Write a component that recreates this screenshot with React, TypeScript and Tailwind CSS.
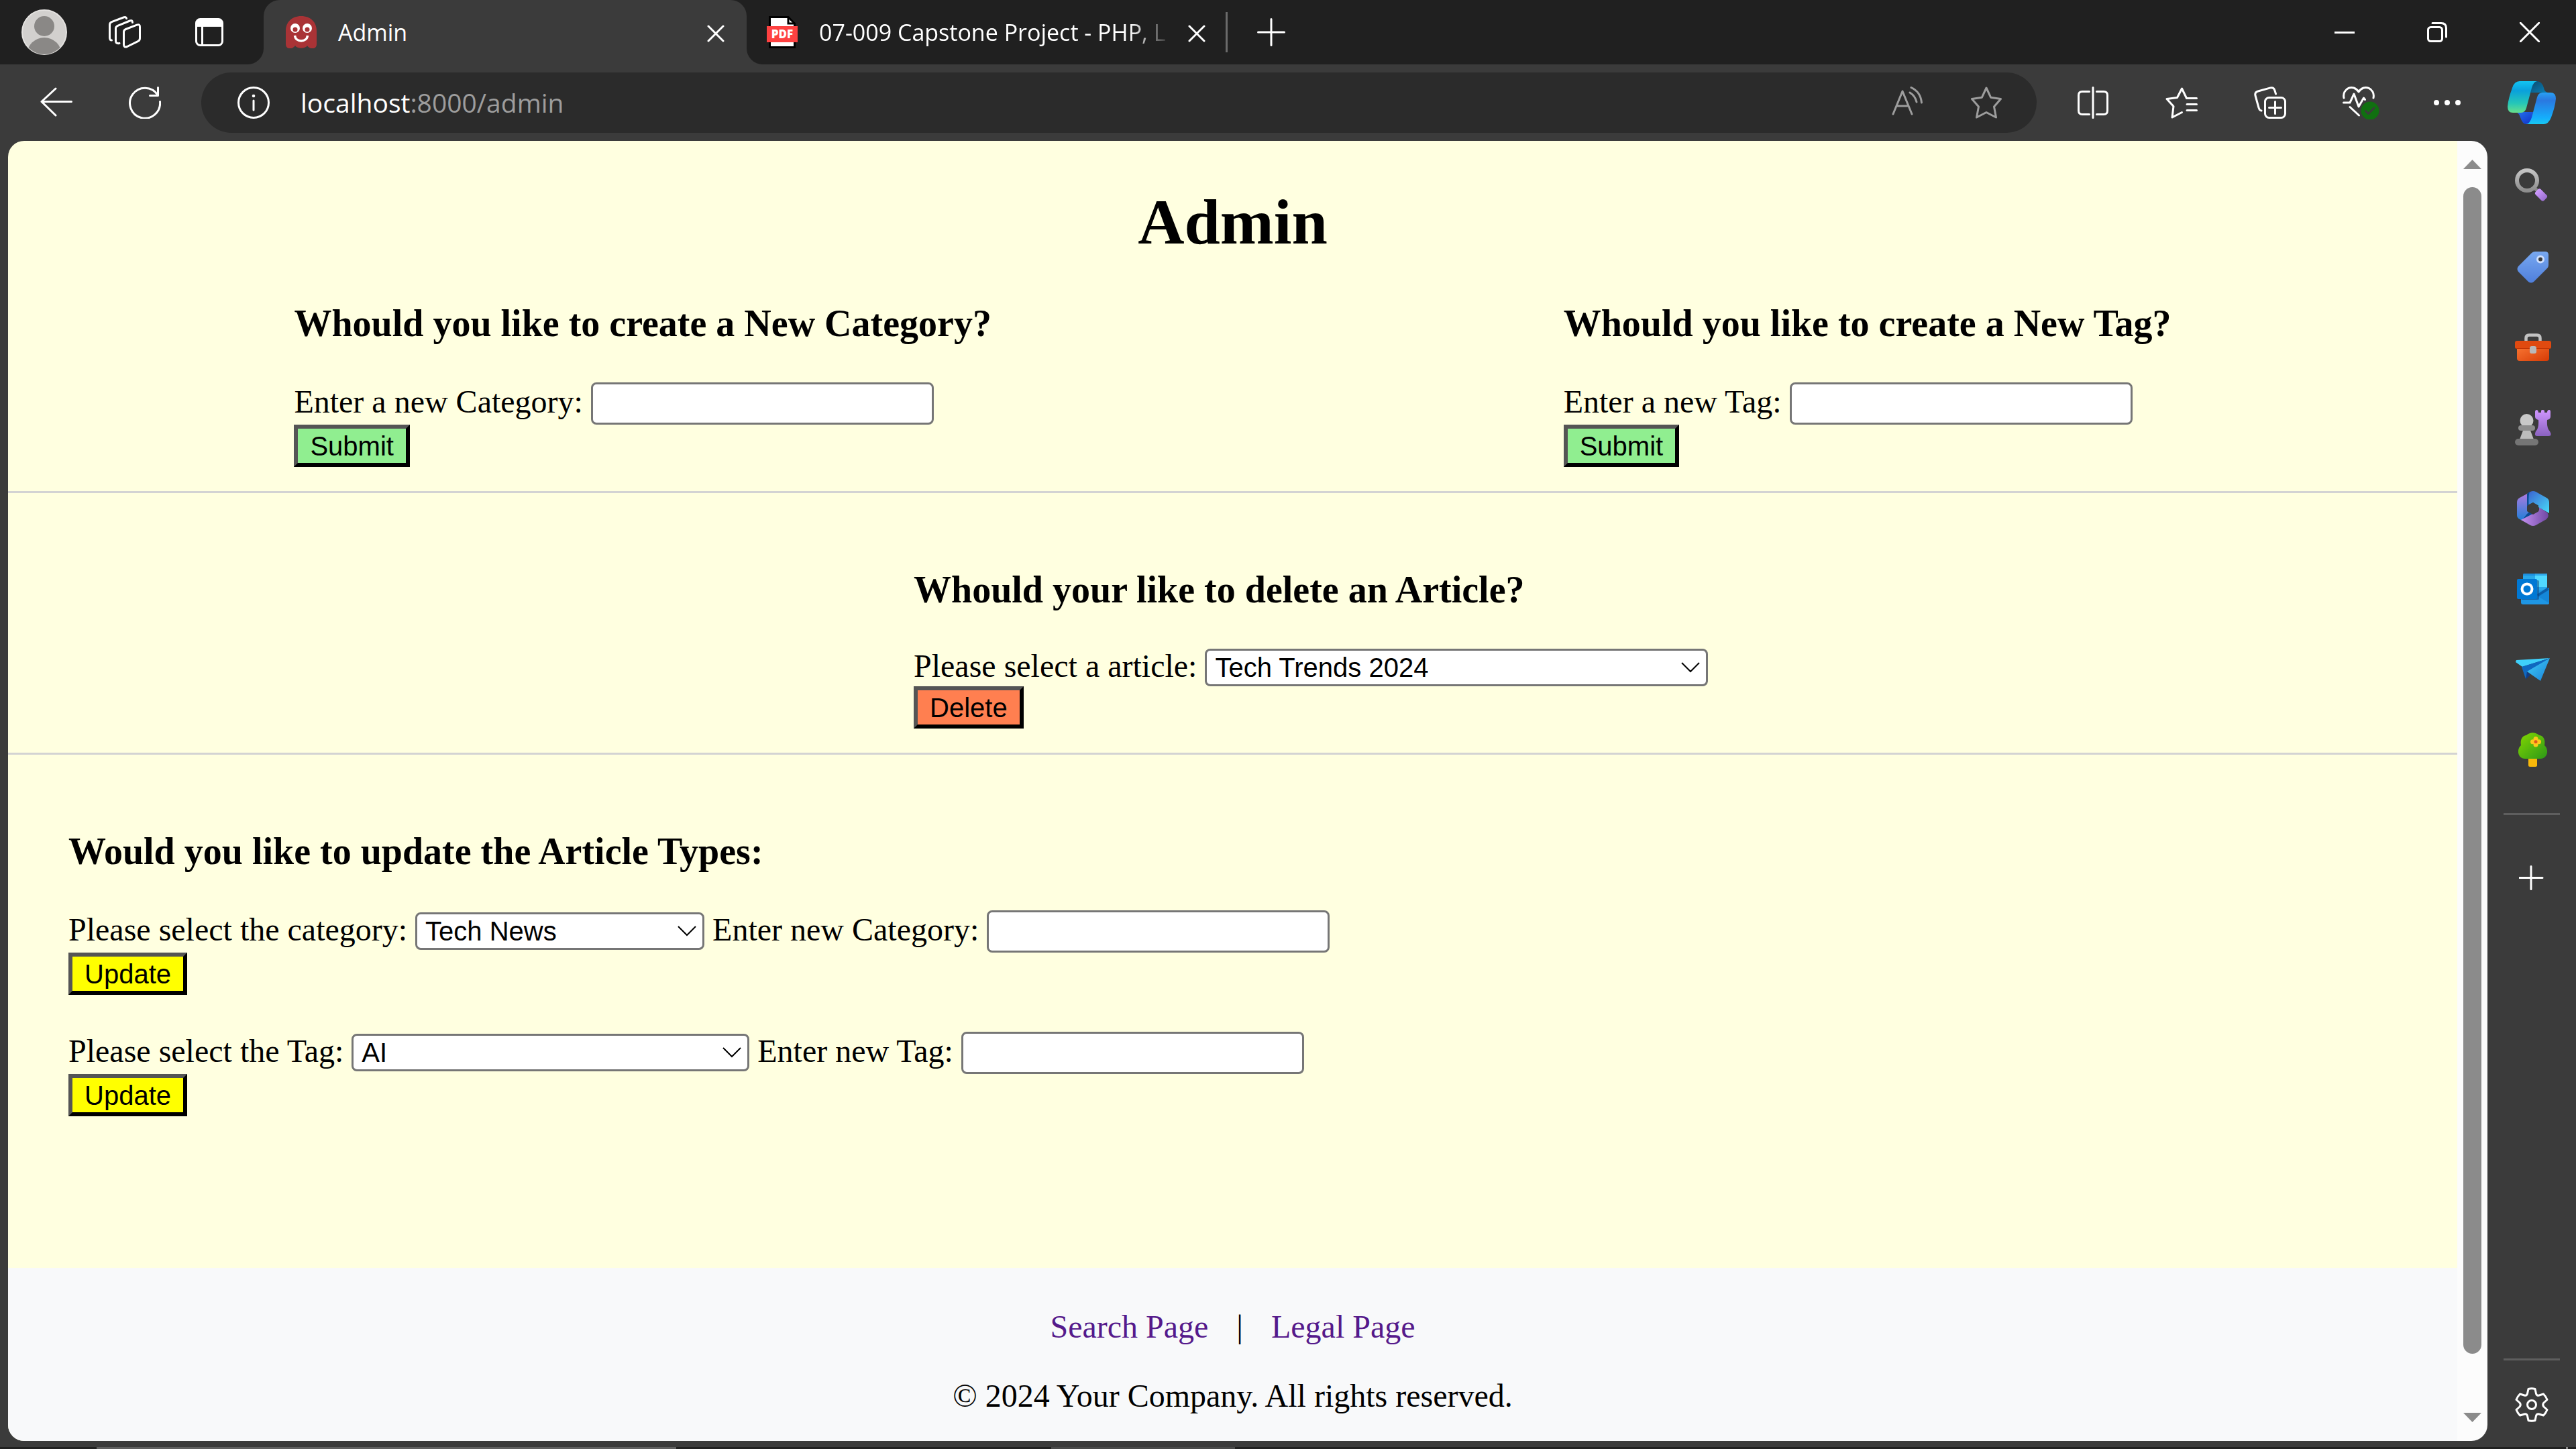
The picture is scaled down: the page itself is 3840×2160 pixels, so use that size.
import React, { useState } from "react";

type IconProps = { w: number; h: number; children: React.ReactNode; className?: string };

function Icon({ w, h, children, className }: IconProps) {
  return (
    <svg
      width={w}
      height={h}
      viewBox={`0 0 ${w} ${h}`}
      fill="none"
      stroke="currentColor"
      strokeWidth={3}
      strokeLinecap="round"
      strokeLinejoin="round"
      aria-hidden="true"
      className={"shrink-0 " + (className ?? "")}
    >
      {children}
    </svg>
  );
}

/* ---------- Tab strip icons ---------- */

const AvatarIcon = () => (
  <Icon w={68} h={68}>
    <defs>
      <clipPath id="avatar-clip">
        <circle cx="34" cy="34" r="33" />
      </clipPath>
    </defs>
    <circle cx="34" cy="34" r="33" fill="#d2d0ce" stroke="#e4e2e0" strokeWidth="2" />
    <g clipPath="url(#avatar-clip)" stroke="none" fill="#8a8886">
      <circle cx="34" cy="25" r="15" />
      <circle cx="34" cy="68" r="26" />
    </g>
  </Icon>
);

const WorkspacesIcon = () => (
  <Icon w={48} h={48}>
    <path d="M25.500 19.500 42 13.200Q46.500 11.600 46.500 16V33Q46.500 36.500 43.500 37.700L27.500 45.500Q22.500 47.500 22.500 42.500V23.500Q22.500 20.700 25.500 19.500Z" />
    <path d="M35.500 9.500Q35.500 5.500 31.500 7L13.500 14.300Q10.500 15.500 10.500 18.500V37Q10.500 41.500 16 40.500" />
    <path d="M26.500 3.500Q26 0.700 22 2L4.500 8.600Q1.500 9.800 1.500 13V32Q1.500 36 4.500 36" />
  </Icon>
);

const TabActionsIcon = () => (
  <Icon w={42} h={42}>
    <rect x="1.500" y="1.500" width="39" height="39" rx="6" />
    <path d="M1.500 12V7.500a6 6 0 0 1 6-6h27a6 6 0 0 1 6 6V12Z" fill="currentColor" strokeWidth="1" />
    <path d="M10.500 12V40" />
  </Icon>
);

const GhostIcon = () => (
  <Icon w={46} h={48}>
    <g stroke="none">
      <path
        d="M0 22C0 9 9 0 23 0S46 9 46 22V42C46 50 36 50 32 44C29 49 17 49 14 44C10 50 0 50 0 42Z"
        fill="#a93336"
      />
      <circle cx="14" cy="18" r="7" fill="#fff" />
      <circle cx="32" cy="18" r="7" fill="#fff" />
      <circle cx="14" cy="20" r="3.500" fill="#a93336" />
      <circle cx="32" cy="20" r="3.500" fill="#a93336" />
    </g>
    <path d="M13.500 29C14.500 39.500 31.500 39.500 32.500 29" stroke="#fff" strokeWidth="3.500" strokeLinecap="butt" />
  </Icon>
);

const PdfIcon = () => (
  <Icon w={46} h={48}>
    <path d="M4.500 1.500H32L41.500 11V46.500H4.500Z" fill="#fff" stroke="#000" strokeLinejoin="miter" />
    <path d="M32 1.500V11H41.500" stroke="#000" strokeLinejoin="miter" />
    <rect x="0" y="15" width="46" height="24" fill="#ff4141" stroke="none" />
    <text
      x="23"
      y="33"
      textAnchor="middle"
      fill="#fff"
      stroke="none"
      fontSize="17"
      fontWeight="800"
      fontFamily="'Open Sans', sans-serif"
    >
      PDF
    </text>
  </Icon>
);

const CloseIcon = () => (
  <Icon w={26} h={26}>
    <path d="M2 2 24 24M24 2 2 24" />
  </Icon>
);

const NewTabIcon = () => (
  <Icon w={42} h={42}>
    <path d="M21 1.500V40.500M1.500 21H40.500" />
  </Icon>
);

const MinimizeIcon = () => (
  <Icon w={30} h={30}>
    <path d="M0 15.500H30" strokeLinecap="butt" />
  </Icon>
);

const RestoreIcon = () => (
  <Icon w={30} h={30}>
    <rect x="1.500" y="7.500" width="21" height="21" rx="4" />
    <path d="M8 1.500H21Q28.500 1.500 28.500 9V22" />
  </Icon>
);

const WindowCloseIcon = () => (
  <Icon w={30} h={30}>
    <path d="M1 1 29 29M29 1 1 29" />
  </Icon>
);

/* ---------- Toolbar icons ---------- */

const BackIcon = () => (
  <Icon w={48} h={48}>
    <path d="M46.500 22.500H2M23 3 2 22.500 23 43" />
  </Icon>
);

const RefreshIcon = () => (
  <Icon w={48} h={48}>
    <path d="M46.500 22.500A22.500 22.500 0 1 1 43 12.500M43.500 1.500V13.500H31.500" />
  </Icon>
);

const InfoIcon = () => (
  <Icon w={48} h={48}>
    <circle cx="24" cy="24" r="22.500" />
    <path d="M24 21V35" />
    <circle cx="24" cy="14" r="2.300" fill="currentColor" stroke="none" />
  </Icon>
);

const ReadAloudIcon = () => (
  <Icon w={48} h={48} className="text-[#9d9d9d]">
    <path d="M2 41 16 7 30 41M7 29H25M27 9Q35 14 37 23M29 1.500Q43 8 44.500 24" />
  </Icon>
);

const StarIcon = () => (
  <Icon w={48} h={48} className="text-[#9d9d9d]">
    <path d="M24 2 30.700 16.300 45.500 18.500 35.500 30 38.500 46 24 38.500 9.500 46 12.500 30 2.500 18.500 17.300 16.300Z" />
  </Icon>
);

const SplitIcon = () => (
  <Icon w={48} h={48}>
    <path d="M24 1.500V46.500M18.500 7.500H8Q2.500 7.500 2.500 13V36Q2.500 41.500 8 41.500H18.500M29.500 7.500H40Q45.500 7.500 45.500 13V36Q45.500 41.500 40 41.500H29.500" />
  </Icon>
);

const FavoritesIcon = () => (
  <Icon w={48} h={48}>
    <path d="M46.500 17.500H31.500L24.500 3 17.500 16.500 2 18.500 12 29.500 10 46 24.500 38.500M32 26.500H46.500M32 35.500H46.500" />
  </Icon>
);

const CollectionsIcon = () => (
  <Icon w={48} h={48}>
    <rect x="16.500" y="16.500" width="30" height="30" rx="6" />
    <path d="M31.500 22.500V40.500M22.500 31.500H40.500M32.500 11 31 6Q29.500 .8 24.500 1.900L6 7Q.8 8.500 2 13.500L7 31.500Q8 35.500 11 36" />
  </Icon>
);

const HealthIcon = () => (
  <Icon w={56} h={50}>
    <path d="M2 18C-1 4 16-4 24 9C32-4 49 4 46 18M1.500 25H11L17 12 24 31 31.500 18 33.500 20.500M11 31.500 24.500 44" />
    <circle cx="41" cy="37" r="13.500" fill="#107010" stroke="none" />
    <path d="M34.500 37.500 38.500 41.500 47 33" stroke="#3b3b3b" />
  </Icon>
);

const MoreIcon = () => (
  <Icon w={48} h={48}>
    <g fill="currentColor" stroke="none">
      <circle cx="8" cy="24" r="4" />
      <circle cx="24" cy="24" r="4" />
      <circle cx="40" cy="24" r="4" />
    </g>
  </Icon>
);

const CopilotIcon = () => (
  <Icon w={72} h={64}>
    <defs>
      <linearGradient id="cp-left" x1="0" y1="0" x2="0" y2="1">
        <stop offset="0" stopColor="#12c4f2" />
        <stop offset=".3" stopColor="#0aa0dc" />
        <stop offset=".7" stopColor="#25c6b8" />
        <stop offset="1" stopColor="#66e08c" />
      </linearGradient>
      <linearGradient id="cp-right" x1="0" y1="0" x2="0" y2="1">
        <stop offset="0" stopColor="#28a0f4" />
        <stop offset=".25" stopColor="#2a78e0" />
        <stop offset=".8" stopColor="#15aefc" />
        <stop offset="1" stopColor="#18c8f0" />
      </linearGradient>
      <linearGradient id="cp-top" x1="0" y1="0" x2="1" y2="1">
        <stop offset="0" stopColor="#0c4a6c" />
        <stop offset="1" stopColor="#0a80b8" />
      </linearGradient>
      <linearGradient id="cp-bottom" x1="0" y1="0" x2="1" y2="1">
        <stop offset="0" stopColor="#2474ec" />
        <stop offset="1" stopColor="#1130c8" />
      </linearGradient>
    </defs>
    <g stroke="none">
      <path d="M36 0H44Q51 0 54 10Q55 16 60 17H34Z" fill="url(#cp-top)" />
      <path d="M36 64H28Q22 64 19 54Q17 47 12 46L22 46H38Z" fill="url(#cp-bottom)" />
      <path d="M18 0H44Q39 0 36 10L28 40Q26 47 20 47H8Q0 47 0 38Q1 26 7 10Q10 0 18 0Z" fill="url(#cp-left)" />
      <path d="M54 64H27Q33 64 36 54L44 24Q46 17 52 17H64Q72 17 72 26Q71 38 65 54Q61 64 54 64Z" fill="url(#cp-right)" />
    </g>
  </Icon>
);

/* ---------- Sidebar icons ---------- */

const SearchIcon = () => (
  <Icon w={54} h={54}>
    <defs>
      <linearGradient id="sr-ring" x1="0" y1="0" x2="0" y2="1">
        <stop offset="0" stopColor="#c4c4c4" />
        <stop offset="1" stopColor="#8e8e8e" />
      </linearGradient>
      <linearGradient id="sr-handle" x1="0" y1="0" x2="1" y2="0">
        <stop offset="0" stopColor="#cf9bff" />
        <stop offset="1" stopColor="#9a6fd0" />
      </linearGradient>
    </defs>
    <path d="M29 29 35 35" stroke="#8a8a8a" strokeWidth="5" />
    <circle cx="18" cy="18" r="15" stroke="url(#sr-ring)" strokeWidth="6" />
    <rect x="30" y="34" width="18" height="11" rx="3" transform="rotate(45 39 39.500)" fill="url(#sr-handle)" stroke="none" />
  </Icon>
);

const ShoppingIcon = () => (
  <Icon w={48} h={48}>
    <defs>
      <linearGradient id="tag-fill" x1="0" y1="0" x2="0" y2="1">
        <stop offset="0" stopColor="#78a8f0" />
        <stop offset="1" stopColor="#4f7fdc" />
      </linearGradient>
    </defs>
    <path
      d="M22 3Q24 1 27 1H42Q47 1 47 6V21Q47 24 45 26L25 46Q21 49 17 46L2 31Q-1 27 2 23Z"
      fill="url(#tag-fill)"
      stroke="none"
    />
    <circle cx="35" cy="12.500" r="4.500" fill="#3b3b3b" stroke="#cfe0ff" />
  </Icon>
);

const ToolsIcon = () => (
  <Icon w={54} h={42}>
    <defs>
      <linearGradient id="tool-fill" x1="0" y1="0" x2="1" y2="1">
        <stop offset="0" stopColor="#fb7a36" />
        <stop offset="1" stopColor="#d63b05" />
      </linearGradient>
    </defs>
    <path d="M16.500 12V7Q16.500 2.500 21 2.500H33Q37.500 2.500 37.500 7V12" stroke="#c2c2c2" strokeWidth="4.500" strokeLinecap="butt" />
    <path d="M3 16H51V37Q51 41 47 41H7Q3 41 3 37Z" fill="url(#tool-fill)" stroke="none" />
    <rect x="0" y="11" width="54" height="12" rx="3" fill="#e04a10" stroke="none" />
    <path d="M2 22.500H52" stroke="#c23505" strokeWidth="1" />
    <rect x="22" y="19" width="10" height="11" rx="3" fill="#b9b9b9" stroke="none" />
  </Icon>
);

const GamesIcon = () => (
  <Icon w={54} h={54}>
    <defs>
      <linearGradient id="rook-fill" x1="0" y1="0" x2="0" y2="1">
        <stop offset="0" stopColor="#d096ff" />
        <stop offset="1" stopColor="#8a62c0" />
      </linearGradient>
    </defs>
    <g stroke="none">
      <path
        d="M30 3Q30 0 33 0Q35 1 35 4H39V1Q41-1 44 1V4H48Q48 0 51 0Q53 0 53 3V10Q53 14 48 15Q47 27 52 32Q56 39 50 39H33Q28 39 31 32Q36 27 35 15Q30 14 30 10Z"
        fill="url(#rook-fill)"
      />
      <path d="M13 28H22L28 44H7Z" fill="#bcbcbc" />
      <circle cx="17.500" cy="16" r="10" fill="#c8c8c8" />
      <rect x="5" y="23" width="25" height="8" rx="4" fill="#8c8c8c" />
      <rect x="0" y="43" width="35" height="10" rx="5" fill="#757575" />
    </g>
  </Icon>
);

const M365Icon = () => (
  <Icon w={48} h={52}>
    <defs>
      <linearGradient id="m-left" x1="0" y1="0" x2="0" y2="1">
        <stop offset="0" stopColor="#b07ae0" />
        <stop offset="1" stopColor="#1f7fd8" />
      </linearGradient>
      <linearGradient id="m-top" x1="0" y1="0" x2="1" y2="1">
        <stop offset="0" stopColor="#3a62d0" />
        <stop offset="1" stopColor="#48dcf8" />
      </linearGradient>
      <linearGradient id="m-bottom" x1="0" y1="0" x2="1" y2="0">
        <stop offset="0" stopColor="#c490f0" />
        <stop offset="1" stopColor="#7048a4" />
      </linearGradient>
    </defs>
    <g stroke="none">
      <path d="M17 3 4 10Q0 12 0 17V36Q0 40 4 42L8 44L24 36L15 30V8Z" fill="url(#m-left)" />
      <path d="M8 43 17 38 25 36 19 31 15 34Z" fill="#0a4c94" />
      <path d="M6 43 33 29V24L45 32Q49 37 44 42L28 51Q24 53 20 51Z" fill="url(#m-bottom)" />
      <path d="M16 3 20 1Q24-1 28 1L44 10Q48 12 48 17V33L32 24 24 17 16 21Z" fill="url(#m-top)" />
      <path d="M15 4 19 1Q17 5 17.500 20L15 23Z" fill="#0a4c94" />
      <path d="M24 17 32 21.500V30.500L24 35 16 30.500V21.500Z" fill="#3b3b3b" />
    </g>
  </Icon>
);

const OutlookIcon = () => (
  <Icon w={48} h={48}>
    <g stroke="none">
      <rect x="9" y="1" width="36" height="30" rx="2" fill="#28a8ea" />
      <rect x="27" y="1" width="18" height="20" fill="#50d9ff" />
      <rect x="9" y="1" width="36" height="3" fill="#0f78d4" opacity=".5" />
      <path d="M6 26H48V45Q48 47 45 47H9Q6 47 6 44Z" fill="#1e96e4" />
      <path d="M48 22V45L28 33Z" fill="#1487d9" />
      <path d="M30 32 45 22 48 25 32 35Z" fill="#0b5ea8" />
      <rect x="6" y="11" width="27" height="29" rx="2" fill="#0a3c78" opacity=".5" />
      <rect x="0" y="9" width="30" height="30" rx="2" fill="#0078d4" />
    </g>
    <circle cx="15" cy="24" r="7.500" stroke="#fff" strokeWidth="4" />
  </Icon>
);

const DropIcon = () => (
  <Icon w={52} h={36}>
    <defs>
      <linearGradient id="drop-fill" x1="0" y1="0" x2="1" y2="1">
        <stop offset="0" stopColor="#40d0f8" />
        <stop offset="1" stopColor="#1a80d8" />
      </linearGradient>
    </defs>
    <g stroke="none">
      <path d="M1 4 51 1 10 14 0 7Z" fill="#3fd0fa" />
      <path d="M9 14 51 1 18 22 15 32Z" fill="#0f68c0" />
      <path d="M15 33 17 21 22 26Z" fill="#103c84" />
      <path d="M51 1 37 35 17 21Z" fill="url(#drop-fill)" />
    </g>
  </Icon>
);

const TreeIcon = () => (
  <Icon w={44} h={52}>
    <defs>
      <linearGradient id="tree-fill" x1="0" y1="0" x2="1" y2="1">
        <stop offset="0" stopColor="#84d800" />
        <stop offset="1" stopColor="#2c9818" />
      </linearGradient>
    </defs>
    <g stroke="none">
      <rect x="15" y="35" width="13" height="16" rx="2.500" fill="#f8b80a" />
      <path
        d="M10 39C-1 39-3 25 4 19C2 9 8 4 12 4C18-1 25-1 31 4C36 4 41 9 39 19C46 25 44 39 33 39Z"
        fill="url(#tree-fill)"
      />
      <g fill="#fcc81c">
        <circle cx="26" cy="9.500" r="3.500" />
        <circle cx="26" cy="18" r="3.500" />
        <circle cx="21.500" cy="13.700" r="3.500" />
        <circle cx="30.500" cy="13.700" r="3.500" />
      </g>
      <circle cx="26" cy="13.700" r="2.500" fill="#e05a1c" />
    </g>
  </Icon>
);

const AddIcon = () => (
  <Icon w={38} h={38}>
    <path d="M18 1.500V35.500M1 18.500H35" />
  </Icon>
);

const SettingsIcon = () => (
  <Icon w={50} h={52}>
    <path d="M20 2.500Q25 1 30 2.500L31.500 9.500Q32.500 13 36 12L42.500 10Q46 13.500 48 18.500L43 23Q40.500 26 43 29L48 33.500Q46 38.500 42.500 42L36 40Q32.500 39 31.500 42.500L30 49.500Q25 51 20 49.500L18.500 42.500Q17.500 39 14 40L7.500 42Q4 38.500 2 33.500L7 29Q9.500 26 7 23L2 18.500Q4 13.500 7.500 10L14 12Q17.500 13 18.500 9.500Z" />
    <circle cx="25" cy="26" r="6.500" />
  </Icon>
);

/* ---------- Browser frame ---------- */

function IconButton({ label, className, children }: { label: string; className: string; children: React.ReactNode }) {
  return (
    <button type="button" aria-label={label} className={"flex shrink-0 items-center justify-center " + className}>
      {children}
    </button>
  );
}

function TabCurve({ side }: { side: "left" | "right" }) {
  return (
    <svg
      width="24"
      height="24"
      viewBox="0 0 24 24"
      aria-hidden="true"
      className={side === "left" ? "absolute bottom-0 -left-6" : "absolute -right-6 bottom-0"}
    >
      <path d={side === "left" ? "M24 0V24H0A24 24 0 0 0 24 0Z" : "M0 0V24H24A24 24 0 0 1 0 0Z"} fill="#3b3b3b" />
    </svg>
  );
}

function TabStrip() {
  return (
    <header className="flex h-24 shrink-0 items-center bg-[#202020] font-['Open_Sans',sans-serif] text-[34px] text-white">
      <div className="flex w-[393px] shrink-0 items-center pl-8">
        <IconButton label="Profile" className="w-[68px]"><AvatarIcon /></IconButton>
        <IconButton label="Workspaces" className="ml-[62px] w-12"><WorkspacesIcon /></IconButton>
        <IconButton label="Tab actions" className="ml-[81px] w-[42px]"><TabActionsIcon /></IconButton>
      </div>
      <div className="relative flex h-24 w-[720px] shrink-0 items-center rounded-t-[24px] bg-[#3b3b3b] px-[33px]">
        <TabCurve side="left" />
        <TabCurve side="right" />
        <GhostIcon />
        <span className="ml-8 flex-1">Admin</span>
        <IconButton label="Close Admin tab" className="w-[26px] pt-1"><CloseIcon /></IconButton>
      </div>
      <div className="flex h-24 w-[714px] shrink-0 items-center px-[30px]">
        <PdfIcon />
        <span className="ml-8 flex-1 whitespace-nowrap [mask-image:linear-gradient(to_right,black_88%,transparent)]">
          07-009 Capstone Project - PHP, L
        </span>
        <IconButton label="Close PDF tab" className="ml-6 w-[26px] pt-1"><CloseIcon /></IconButton>
      </div>
      <div className="h-[60px] w-[3px] shrink-0 bg-[#6b6b6b]" />
      <IconButton label="New tab" className="ml-11 w-[42px]"><NewTabIcon /></IconButton>
      <div className="flex-1" />
      <IconButton label="Minimize" className="h-24 w-[138px]"><MinimizeIcon /></IconButton>
      <IconButton label="Restore" className="h-24 w-[138px]"><RestoreIcon /></IconButton>
      <IconButton label="Close window" className="h-24 w-[138px]"><WindowCloseIcon /></IconButton>
    </header>
  );
}

function Toolbar() {
  return (
    <nav className="flex h-[114px] shrink-0 items-center bg-[#3b3b3b] text-white">
      <IconButton label="Back" className="ml-[60px] w-12"><BackIcon /></IconButton>
      <IconButton label="Refresh" className="ml-[84px] w-12"><RefreshIcon /></IconButton>
      <div className="ml-[60px] flex h-[90px] flex-1 items-center rounded-full bg-[#2b2b2b] pr-[51px] pl-[54px]">
        <IconButton label="Site information" className="w-12"><InfoIcon /></IconButton>
        <p className="ml-[46px] flex-1 font-['Open_Sans',sans-serif] text-[39px] leading-[56px] text-[#9d9d9d]">
          <span className="text-white">localhost</span>:8000/admin
        </p>
        <IconButton label="Read aloud" className="w-12"><ReadAloudIcon /></IconButton>
        <IconButton label="Add to favorites" className="ml-[69px] w-12"><StarIcon /></IconButton>
      </div>
      <div className="flex w-[804px] shrink-0 items-center pl-[60px]">
        <IconButton label="Split screen" className="w-12"><SplitIcon /></IconButton>
        <IconButton label="Favorites" className="ml-[84px] w-12"><FavoritesIcon /></IconButton>
        <IconButton label="Collections" className="ml-[84px] w-12"><CollectionsIcon /></IconButton>
        <IconButton label="Browser essentials" className="ml-[84px] w-14"><HealthIcon /></IconButton>
        <IconButton label="Settings and more" className="ml-[76px] w-12"><MoreIcon /></IconButton>
        <IconButton label="Copilot" className="ml-[66px] w-[72px]"><CopilotIcon /></IconButton>
      </div>
    </nav>
  );
}

function Sidebar() {
  const cell = "h-[120px] w-full pl-[3px]";
  return (
    <aside className="flex w-[132px] shrink-0 flex-col items-center bg-[#3b3b3b] pt-2 text-white">
      <IconButton label="Search" className={cell}><SearchIcon /></IconButton>
      <IconButton label="Shopping" className={cell}><ShoppingIcon /></IconButton>
      <IconButton label="Tools" className={cell}><ToolsIcon /></IconButton>
      <IconButton label="Games" className={cell}><GamesIcon /></IconButton>
      <IconButton label="Microsoft 365" className={cell}><M365Icon /></IconButton>
      <IconButton label="Outlook" className={cell}><OutlookIcon /></IconButton>
      <IconButton label="Drop" className={cell}><DropIcon /></IconButton>
      <IconButton label="Tree" className={cell}><TreeIcon /></IconButton>
      <div className="my-[34px] h-[3px] w-[84px] shrink-0 bg-[#5e5e5e]" />
      <IconButton label="Customize sidebar" className="h-[120px] w-full"><AddIcon /></IconButton>
      <div className="flex-1" />
      <div className="h-[3px] w-[84px] shrink-0 bg-[#5e5e5e]" />
      <IconButton label="Settings" className="h-[129px] w-full pt-[3px]"><SettingsIcon /></IconButton>
    </aside>
  );
}

function ScrollBar() {
  return (
    <div className="flex w-[45px] shrink-0 flex-col items-center bg-[#fcfcfc] py-7" aria-hidden="true">
      <svg width="27" height="14" viewBox="0 0 27 14">
        <path d="M0 14 13.500 0 27 14Z" fill="#8b8b8b" />
      </svg>
      <div className="mt-[27px] mb-22 w-[27px] flex-1 rounded-full bg-[#8b8b8b]" />
      <svg width="27" height="14" viewBox="0 0 27 14">
        <path d="M0 0 13.500 14 27 0Z" fill="#8b8b8b" />
      </svg>
    </div>
  );
}

/* ---------- Admin page ---------- */

function Heading({ children }: { children: React.ReactNode }) {
  return <h3 className="text-[56px] leading-[64px] font-bold whitespace-nowrap">{children}</h3>;
}

function TextField({ id, label }: { id: string; label: string }) {
  return (
    <>
      <label htmlFor={id} className="whitespace-nowrap">{label}</label>
      <input
        id={id}
        type="text"
        className="h-[63px] w-[511px] rounded-lg border-[3px] border-[#767676] bg-white px-2 font-['Liberation_Sans',sans-serif] text-[40px] leading-[46px]"
      />
    </>
  );
}

function SelectField({ id, label, options, width }: { id: string; label: string; options: string[]; width: string }) {
  const [value, setValue] = useState(options[0]);
  return (
    <>
      <label htmlFor={id} className="whitespace-nowrap">{label}</label>
      <span className={"relative inline-flex items-baseline " + width}>
        <select
          id={id}
          value={value}
          onChange={(e) => setValue(e.target.value)}
          className="h-14 w-full appearance-none rounded-lg border-[3px] border-[#767676] bg-white pl-3 font-['Liberation_Sans',sans-serif] text-[40px] leading-[46px]"
        >
          {options.map((o) => (
            <option key={o}>{o}</option>
          ))}
        </select>
        <svg
          width="28"
          height="16"
          viewBox="0 0 28 16"
          fill="none"
          stroke="#000"
          strokeWidth="2"
          aria-hidden="true"
          className="pointer-events-none absolute top-5 right-3"
        >
          <path d="M1 1 14 14 27 1" />
        </svg>
      </span>
    </>
  );
}

function ActionButton({ color, children }: { color: string; children: React.ReactNode }) {
  return (
    <button
      type="submit"
      className={
        "block h-[63px] border-[6px] border-t-[#555555] border-r-black border-b-black border-l-[#555555] px-[18px] font-['Liberation_Sans',sans-serif] text-[40px] leading-[46px] " +
        color
      }
    >
      {children}
    </button>
  );
}

const stay = (e: React.FormEvent) => e.preventDefault();

function AdminPage() {
  return (
    <div className="flex min-w-0 flex-1 flex-col bg-[#ffffe0] font-['Liberation_Serif',serif] text-[48px] leading-[55px] text-black">
      <main className="flex-1">
        <h1 className="mt-[66px] text-center text-[96px] leading-[110px] font-bold">Admin</h1>

        <section className="flex justify-around pt-16 pb-9">
          <form onSubmit={stay}>
            <Heading>Whould you like to create a New Category?</Heading>
            <div className="mt-14 flex items-baseline gap-3">
              <TextField id="new-category" label="Enter a new Category:" />
            </div>
            <ActionButton color="bg-[#90ee90]">Submit</ActionButton>
          </form>
          <form onSubmit={stay}>
            <Heading>Whould you like to create a New Tag?</Heading>
            <div className="mt-14 flex items-baseline gap-3">
              <TextField id="new-tag" label="Enter a new Tag:" />
            </div>
            <ActionButton color="bg-[#90ee90]">Submit</ActionButton>
          </form>
        </section>

        <hr className="border-t-[3px] border-[#d3d3d3]" />

        <section className="flex justify-center pt-28 pb-9">
          <form onSubmit={stay} className="w-[951px]">
            <Heading>Whould your like to delete an Article?</Heading>
            <div className="mt-[54px] flex items-baseline gap-3">
              <SelectField id="article" label="Please select a article:" options={["Tech Trends 2024"]} width="w-[750px] shrink-0" />
            </div>
            <ActionButton color="bg-[#ff7f50]">Delete</ActionButton>
          </form>
        </section>

        <hr className="border-t-[3px] border-[#d3d3d3]" />

        <section className="pt-28 pl-[90px]">
          <Heading>Would you like to update the Article Types:</Heading>
          <form onSubmit={stay} className="mt-14">
            <div className="flex items-baseline gap-3">
              <SelectField id="category" label="Please select the category:" options={["Tech News"]} width="w-[431px] shrink-0" />
              <TextField id="update-category" label="Enter new Category:" />
            </div>
            <ActionButton color="bg-[#ffff00]">Update</ActionButton>
          </form>
          <form onSubmit={stay} className="mt-[55px]">
            <div className="flex items-baseline gap-3">
              <SelectField id="tag" label="Please select the Tag:" options={["AI"]} width="w-[593px] shrink-0" />
              <TextField id="update-tag" label="Enter new Tag:" />
            </div>
            <ActionButton color="bg-[#ffff00]">Update</ActionButton>
          </form>
        </section>
      </main>

      <footer className="bg-[#f8f9fa] pt-[60px] pb-10 text-center">
        <nav className="flex justify-center gap-[42px]">
          <a href="#search" className="text-[#551a8b]">Search Page</a>
          <span>|</span>
          <a href="#legal" className="text-[#551a8b]">Legal Page</a>
        </nav>
        <p className="mt-12">© 2024 Your Company. All rights reserved.</p>
      </footer>
    </div>
  );
}

export default function App() {
  return (
    <div className="flex h-screen flex-col bg-[#3b3b3b]">
      <TabStrip />
      <Toolbar />
      <div className="flex min-h-0 flex-1">
        <div className="mb-[9px] ml-3 flex min-w-0 flex-1 overflow-hidden rounded-[24px]">
          <AdminPage />
          <ScrollBar />
        </div>
        <Sidebar />
      </div>
      <div className="flex h-[3px] shrink-0 bg-[#202020]">
        <div className="ml-36 w-[864px] bg-[#606060]" />
        <div className="ml-[559px] w-[274px] bg-[#4a4a4a]" />
        <div className="mr-3 ml-auto w-[3px] bg-[#8a8a8a]" />
      </div>
    </div>
  );
}
